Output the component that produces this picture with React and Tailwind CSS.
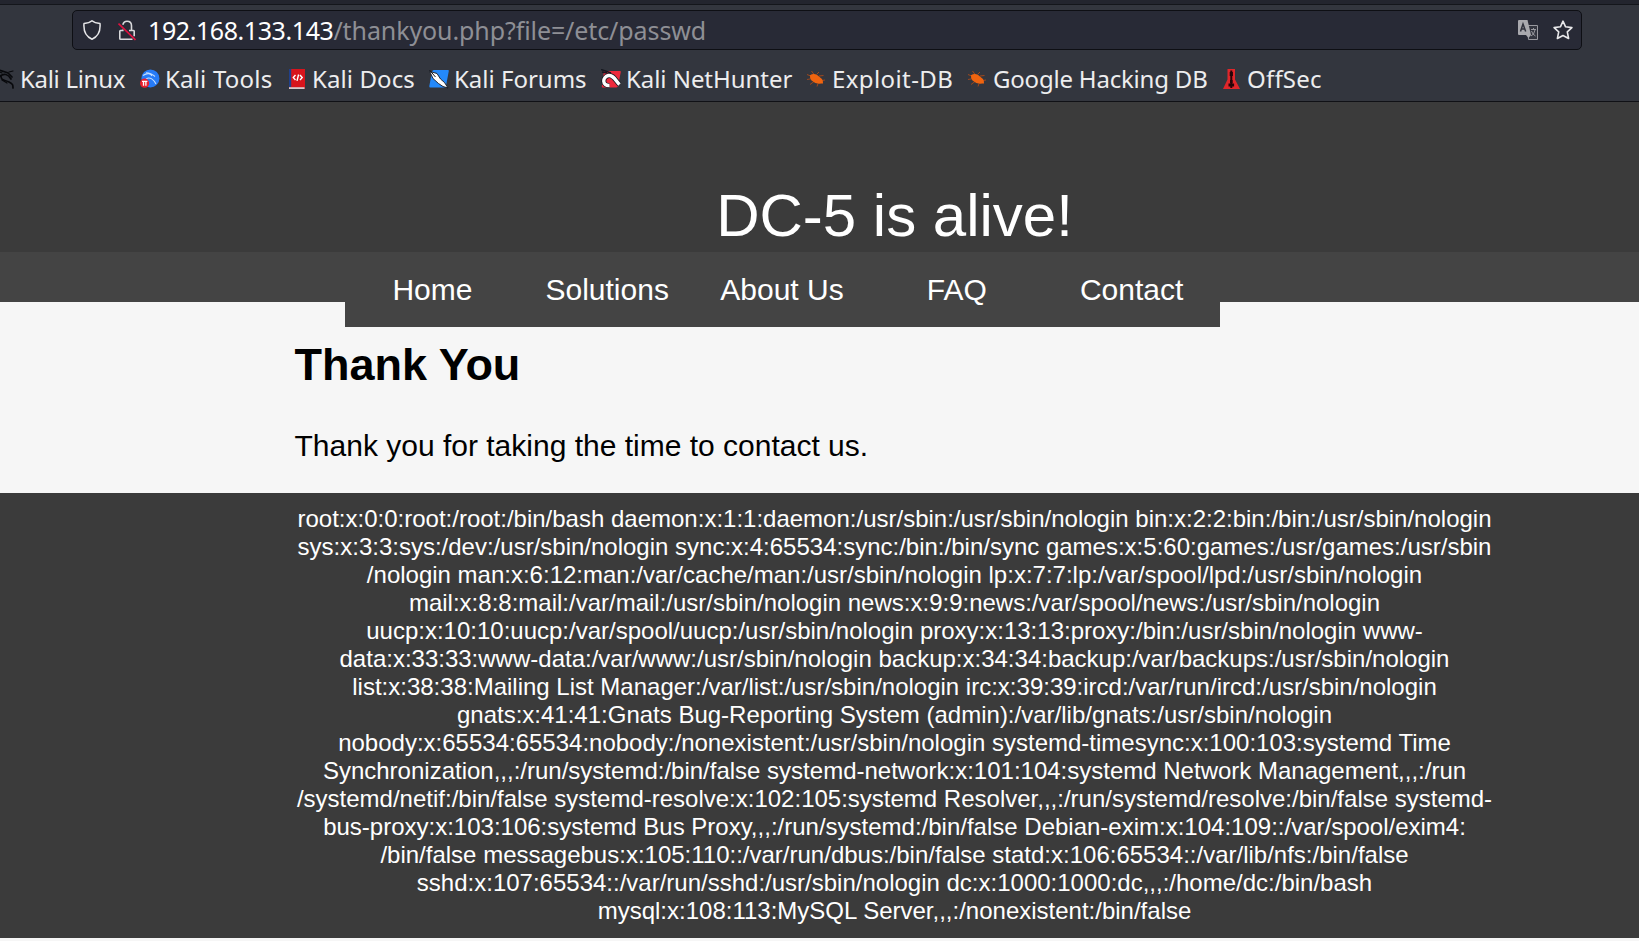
const ui = "font-['Noto_Sans',sans-serif]";

function KaliDragon() {
  return (
    <svg viewBox="0 0 20 22" className="h-[22px] w-5" fill="none" stroke="#08090c" strokeWidth="1.7" strokeLinecap="round">
      <path d="M4 2c4 1 6 2 9 3l4 4M5 8c4-3 8-2 11 3M6 8c0 5 4 4 8 6s4 3 4 6" />
      <path d="M2 3l5 2M14 4l4-1M7 12l5 3" strokeWidth="1.2" />
    </svg>
  );
}
function KaliTools() {
  return (
    <svg viewBox="0 0 20 20" className="size-5">
      <circle cx="10.4" cy="9.4" r="9" fill="#267bf7" />
      <path d="M3 6.500c5-3.500 8-1.500 9 .5M6 3.800c4 0 6 1 9 3.700M6 10c4-3 8 1 10 5" fill="none" stroke="#c4deff" strokeWidth="1.1" />
      <circle cx="4.6" cy="14.2" r="4.6" fill="#e8202e" />
      <path d="M2 12.3h5.400M3.500 12.500v4.200M5.900 12.500v4.200" stroke="#fff" strokeWidth="1.300" />
    </svg>
  );
}
function KaliDocs() {
  return (
    <svg viewBox="0 0 16 20" className="h-5 w-4">
      <path d="M0 0h16v20H0z" fill="#d8141c" />
      <path d="M0 0h2.200v18H0z" fill="#20408a" />
      <path d="M0 18.200h15.500V20H0z" fill="#d6c8cc" />
      <path d="M6.500 6L4.300 8.600l2.200 2.400M11 6l2.200 2.600L11 11M9.600 5.500l-1.600 6.300" fill="none" stroke="#fff" strokeWidth="1.400" />
    </svg>
  );
}
function KaliForums() {
  return (
    <svg viewBox="0 0 20 20" className="size-5">
      <path d="M5 1h14q1 0 .8 1L17 17q-.4 1.500-2 1.500H1.500q-1.500 0-1.200-1.500L3 3q.4-2 2-2z" fill="#2489fa" />
      <path d="M.8 2.500L8 4.500l3.500 5.500 4 3.500 3.500 5.500-5-1.500-4.500-3L4 9.500z" fill="#fff" stroke="#151820" strokeWidth=".9" />
      <path d="M.5 1l6 7" stroke="#151820" strokeWidth="1" />
    </svg>
  );
}
function KaliNetHunter() {
  return (
    <svg viewBox="0 0 20 20" className="size-5">
      <path d="M3 2h16q1 0 .8 1L17 17q-.4 1.500-2 1.500H2q-1.500 0-1.200-1.500z" fill="#ee2a3c" />
      <path d="M0 .5L10 4M1 3l5 1" stroke="#151820" strokeWidth="1.600" />
      <path d="M8.500 16.500C1 17 1 8 7.500 6.500c5-.8 7 5 11 9" fill="none" stroke="#151820" strokeWidth="5" />
      <path d="M8.500 16.500C1 17 1 8 7.500 6.500c5-.8 7 5 11 9" fill="none" stroke="#fff" strokeWidth="3.400" />
    </svg>
  );
}
function Bug() {
  return (
    <svg viewBox="0 0 18 16" className="h-4 w-[18px]">
      <path d="M0 3.500l5 2M4.500 0l3 4M0 8.500l6-1M10 3l2-2M12 5l4.500-.5M3 13.500l4-3M10 15.500l1-3M15 9.500l3-.5" stroke="#a84a1a" strokeWidth=".9" />
      <path d="M3 4.200q3-2.200 6.500-.7l5.500 4.500q1.500 2.500 1 4.500-2.500-.3-4 .3-5-.8-7.500-3.300Q2.500 7 3 4.200z" fill="#f0640f" />
    </svg>
  );
}
function OffSec() {
  return (
    <svg viewBox="0 0 17 20" className="h-5 w-[17px]">
      <path d="M4.500 0h7.500v10.500l5 9.500H0l4.500-9.500z" fill="#e0262a" />
      <path d="M8.300 1.500v17.500" stroke="#250508" strokeWidth="2" />
      <path d="M8.300 3v4M5.500 16h5.600M7 12.500h2.600" stroke="#250508" strokeWidth="3.200" />
    </svg>
  );
}

const bookmarks = [
  { label: "Kali Linux", icon: <KaliDragon />, item: "w-[145px] tracking-[-0.3px]", slot: "w-[25px]" },
  { label: "Kali Tools", icon: <KaliTools />, item: "w-[149px] tracking-[0.2px]", slot: "w-[25px]" },
  { label: "Kali Docs", icon: <KaliDocs />, item: "w-[140px] tracking-[0.1px]", slot: "w-[23px]" },
  { label: "Kali Forums", icon: <KaliForums />, item: "w-[172px]", slot: "w-[25px]" },
  { label: "Kali NetHunter", icon: <KaliNetHunter />, item: "w-[206px] tracking-[-0.05px]", slot: "w-[25px]" },
  { label: "Exploit-DB", icon: <Bug />, item: "w-[161px] tracking-[0.4px]", slot: "w-[25px]" },
  { label: "Google Hacking DB", icon: <Bug />, item: "w-[255px] tracking-[-0.2px]", slot: "w-[25px]" },
  { label: "OffSec", icon: <OffSec />, item: "w-[110px] tracking-[0.2px]", slot: "w-6" },
];

const lines = [
  "root:x:0:0:root:/root:/bin/bash daemon:x:1:1:daemon:/usr/sbin:/usr/sbin/nologin bin:x:2:2:bin:/bin:/usr/sbin/nologin",
  "sys:x:3:3:sys:/dev:/usr/sbin/nologin sync:x:4:65534:sync:/bin:/bin/sync games:x:5:60:games:/usr/games:/usr/sbin",
  "/nologin man:x:6:12:man:/var/cache/man:/usr/sbin/nologin lp:x:7:7:lp:/var/spool/lpd:/usr/sbin/nologin",
  "mail:x:8:8:mail:/var/mail:/usr/sbin/nologin news:x:9:9:news:/var/spool/news:/usr/sbin/nologin",
  "uucp:x:10:10:uucp:/var/spool/uucp:/usr/sbin/nologin proxy:x:13:13:proxy:/bin:/usr/sbin/nologin www-",
  "data:x:33:33:www-data:/var/www:/usr/sbin/nologin backup:x:34:34:backup:/var/backups:/usr/sbin/nologin",
  "list:x:38:38:Mailing List Manager:/var/list:/usr/sbin/nologin irc:x:39:39:ircd:/var/run/ircd:/usr/sbin/nologin",
  "gnats:x:41:41:Gnats Bug-Reporting System (admin):/var/lib/gnats:/usr/sbin/nologin",
  "nobody:x:65534:65534:nobody:/nonexistent:/usr/sbin/nologin systemd-timesync:x:100:103:systemd Time",
  "Synchronization,,,:/run/systemd:/bin/false systemd-network:x:101:104:systemd Network Management,,,:/run",
  "/systemd/netif:/bin/false systemd-resolve:x:102:105:systemd Resolver,,,:/run/systemd/resolve:/bin/false systemd-",
  "bus-proxy:x:103:106:systemd Bus Proxy,,,:/run/systemd:/bin/false Debian-exim:x:104:109::/var/spool/exim4:",
  "/bin/false messagebus:x:105:110::/var/run/dbus:/bin/false statd:x:106:65534::/var/lib/nfs:/bin/false",
  "sshd:x:107:65534::/var/run/sshd:/usr/sbin/nologin dc:x:1000:1000:dc,,,:/home/dc:/bin/bash",
  "mysql:x:108:113:MySQL Server,,,:/nonexistent:/bin/false",
];

export default function App() {
  return (
    <div className="flex h-[941px] w-[1639px] flex-col overflow-hidden bg-[#f6f6f6] font-['Liberation_Sans',sans-serif]">
      <div className={`flex h-[102px] shrink-0 flex-col border-b border-[#101116] bg-[#33363e] ${ui}`}>
        <div className="h-[5px] shrink-0 border-b border-[#14161b] bg-[#23252e]" />
        <div className="mt-[5px] ml-[72px] flex h-10 w-[1510px] shrink-0 items-center rounded-[5px] border border-[#0e0f14] bg-[#282a36] pr-2 pl-[10px]">
          <svg viewBox="0 0 18 20" className="h-5 w-[18px]" fill="none" stroke="#e6e6e8" strokeWidth="1.500" strokeLinejoin="round">
            <path d="M9 .8C7 2.600 4 3.300 1 3.500c-.6 7 1.500 13 8 15.700 6.500-2.700 8.600-8.700 8-15.700-3-.2-6-.9-8-2.700z" />
          </svg>
          <svg viewBox="0 0 18 21" className="ml-[17px] h-[21px] w-[18px]" fill="none">
            <path d="M4.800 4.800C5.500 2.300 7 1.300 9 1.300c2.700 0 4.500 1.800 4.500 4.500v4.700M11 10.500h4.500q.7 0 .7.700v5M4.800 9.500v1H2.500q-.7 0-.7.700v7.300q0 .7.700.7h12" stroke="#d9d9dc" strokeWidth="1.600" />
            <path d="M.5 3.500l17 16.500" stroke="#e0103f" strokeWidth="1.700" />
          </svg>
          <div className="ml-3 flex-1 text-[25px] leading-9 tracking-[-0.1px] whitespace-pre text-white">
            <span className="tracking-[-0.42px]">192.168.133.143</span>
            <span className="text-[#8e8f95]">/thankyou.php?file=/etc/passwd</span>
          </div>
          <svg viewBox="0 0 20 20" className="size-5">
            <path d="M9.500 5.500h10v14h-9z" fill="#33353f" stroke="#99999f" />
            <path d="M1 0h8.500l3.500 15H1q-1 0-1-1V1q0-1 1-1z" fill="#a9a9ae" />
            <path d="M8 15h5l-2.500 3z" fill="#a9a9ae" />
            <path d="M2.500 11.500L5 4l2.700 7.500M3.500 9h3.300" fill="none" stroke="#30323d" strokeWidth="1.500" />
            <path d="M13 9.500h5M15.500 8v1.500M17 10q-1 5-4 6M13.500 11q1 3.500 4 5" fill="none" stroke="#99999f" />
          </svg>
          <svg viewBox="0 0 20 20" className="ml-[15px] size-5" fill="none" stroke="#e8e8ea" strokeWidth="1.600" strokeLinejoin="round">
            <path d="M10 1.200l2.600 5.600 6.300.8-4.600 4.200 1.300 6.700-5.600-3-5.600 3 1.300-6.700L1.100 7.600l6.300-.8z" />
          </svg>
        </div>
        <div className="-ml-[5px] flex h-[51px] items-center pt-[7px] text-2xl leading-9 whitespace-nowrap text-[#ededee]">
          {bookmarks.map((b) => (
            <div key={b.label} className={`flex shrink-0 items-center ${b.item}`}>
              <span className={`flex shrink-0 ${b.slot}`}>{b.icon}</span>
              {b.label}
            </div>
          ))}
        </div>
      </div>

      <header className="h-[150px] shrink-0 bg-[#3b3b3b] pt-[79px] pl-[295px]">
        <h1 className="w-[1199px] text-center text-[60px] leading-[70px] text-white">DC-5 is alive!</h1>
      </header>
      <nav className="h-[50px] shrink-0 bg-[#444]">
        <ul className="ml-[345px] flex h-[75px] w-[875px] bg-[#444] pr-px text-center text-[30px] leading-[75px] text-white">
          {["Home", "Solutions", "About Us", "FAQ", "Contact"].map((t) => (
            <li key={t} className="flex-1 basis-0">{t}</li>
          ))}
        </ul>
      </nav>
      <main className="h-[191px] shrink-0 pt-[37px] pl-[294.5px] text-black">
        <h2 className="text-[45px] leading-[52px] font-bold">Thank You</h2>
        <p className="mt-[38px] text-[30px] leading-[34px]">Thank you for taking the time to contact us.</p>
      </main>
      <footer className="h-[445px] shrink-0 bg-[#3b3b3b] pt-3 pl-[295px] text-2xl leading-7 text-white">
        <div className="flex w-[1199px] flex-col items-center whitespace-nowrap">
          {lines.map((l) => (
            <div key={l}>{l}</div>
          ))}
        </div>
      </footer>
    </div>
  );
}
